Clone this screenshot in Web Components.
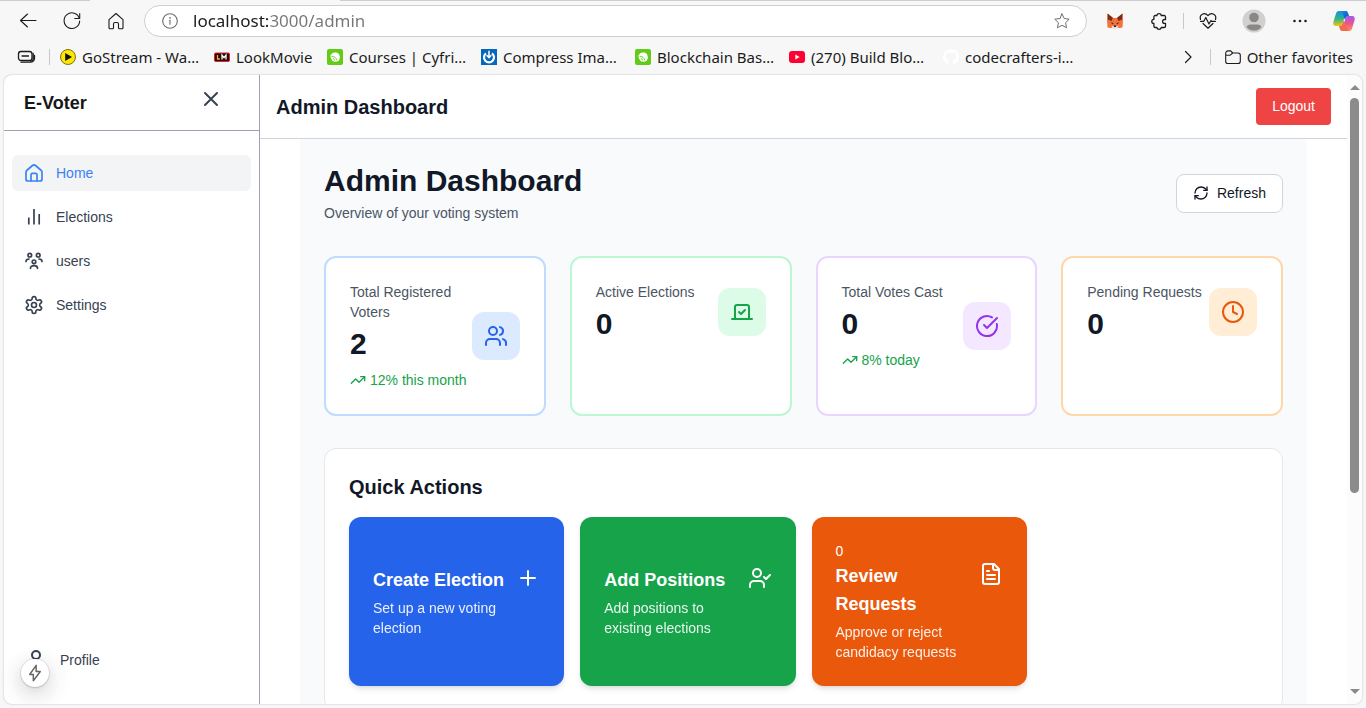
<!DOCTYPE html>
<html lang="en">
<head>
<meta charset="utf-8">
<meta name="viewport" content="width=device-width, initial-scale=1">
<title>E-Voter – Admin Dashboard</title>
<style>
  html, body { margin: 0; height: 100%; }
  body {
    display: flex; flex-direction: column; overflow: hidden;
    background: #f7f7f7; color: #111827;
    font-family: "Liberation Sans", Arial, sans-serif; font-size: 14px; line-height: 20px;
  }
</style>
</head>
<body>
<browser-toolbar></browser-toolbar>
<bookmark-bar>
  <bookmark-link icon="play" href="#gostream">GoStream - Wa…</bookmark-link>
  <bookmark-link icon="lm" href="#lookmovie" short>LookMovie</bookmark-link>
  <bookmark-link icon="cyfrin" href="#courses">Courses | Cyfri…</bookmark-link>
  <bookmark-link icon="compress" href="#compress">Compress Ima…</bookmark-link>
  <bookmark-link icon="cyfrin" href="#blockchain">Blockchain Bas…</bookmark-link>
  <bookmark-link icon="youtube" href="#build">(270) Build Blo…</bookmark-link>
  <bookmark-link icon="github" href="#codecrafters">codecrafters-i…</bookmark-link>
</bookmark-bar>
<page-frame>
  <side-bar slot="side" heading="E-Voter">
    <nav-item icon="home" href="#home" active>Home</nav-item>
    <nav-item icon="bars" href="#elections">Elections</nav-item>
    <nav-item icon="team" href="#users">users</nav-item>
    <nav-item icon="gear" href="#settings">Settings</nav-item>
    <nav-item slot="foot" icon="user" href="#profile" large>Profile</nav-item>
  </side-bar>
  <top-bar>Admin Dashboard</top-bar>
  <dash-board>
    <page-head>
      Admin Dashboard
      <span slot="sub">Overview of your voting system</span>
    </page-head>
    <card-grid>
      <stat-card tone="blue" icon="users" value="2" trend="12% this month">Total Registered Voters</stat-card>
      <stat-card tone="green" icon="vote" value="0">Active Elections</stat-card>
      <stat-card tone="purple" icon="check" value="0" trend="8% today">Total Votes Cast</stat-card>
      <stat-card tone="orange" icon="clock" value="0">Pending Requests</stat-card>
    </card-grid>
    <quick-actions>
      <action-card tone="blue" icon="plus" label="Create Election">Set up a new voting election</action-card>
      <action-card tone="green" icon="usercheck" label="Add Positions">Add positions to existing elections</action-card>
      <action-card tone="orange" icon="file" label="Review Requests" count="0">Approve or reject candidacy requests</action-card>
    </quick-actions>
  </dash-board>
</page-frame>

<script>
const stroke = (w, body, box = 24) =>
  `<svg viewBox="0 0 ${box} ${box}" fill="none" stroke="currentColor" stroke-width="${w}" stroke-linecap="round" stroke-linejoin="round" aria-hidden="true">${body}</svg>`;
const plain = (body, box = 16) => `<svg viewBox="0 0 ${box} ${box}" aria-hidden="true">${body}</svg>`;

const ICONS = {
  back: stroke(1.1, '<path d="M20 11.500H4.500M11.500 5 4.500 11.500l7 6.500"/>'),
  reload: stroke(1.1, '<path d="M19.400 9.500A7.800 7.800 0 1 0 19.700 12"/><path d="M19.700 4.500v5h-5"/>'),
  house: stroke(1.1, '<path d="M5 10.700 12 4.500l7 6.200v8a1 1 0 0 1-1 1h-2.500a1 1 0 0 1-1-1V15a1.500 1.500 0 0 0-1.500-1.500h-2A1.500 1.500 0 0 0 9.500 15v3.700a1 1 0 0 1-1 1H6a1 1 0 0 1-1-1z"/>'),
  info: stroke(1.1, '<circle cx="8" cy="8" r="7.300"/><path d="M8 7.300v4"/><circle cx="8" cy="4.800" r=".35" fill="currentColor"/>', 16),
  star: stroke(1, '<path d="m8 .9 2.200 4.600 5 .7-3.600 3.500.9 5L8 12.300l-4.500 2.400.9-5L.8 6.200l5-.7z"/>', 16),
  fox: plain('<path d="M.5.5 5 5h6L15.500.5l.5 6-.5 8-3 .5h-9l-3-.5-.5-8z" fill="#f5713a"/><path d="M.5.5 6 4.800 4.500 8 1 6.500zM15.500.5 10 4.800 11.500 8 15 6.500z" fill="#7a2c18"/><path d="M3.500 9.500l3 .6-.5 1.300zM12.500 9.500l-3 .6.500 1.300z" fill="#3b2a2a"/><path d="M4.500 13h7l-1 2.500h-5z" fill="#e8ddd5"/><path d="M6.800 12.500h2.400l-.2 1.500H7z" fill="#20242b"/>'),
  puzzle: stroke(1.3, '<path d="M8.200 6.500h1.600a2.300 2.300 0 0 1 4.500 0h2.900a1.300 1.300 0 0 1 1.300 1.300v2.700h-1a1.900 1.900 0 0 0 0 3.800h1v2.900a1.300 1.300 0 0 1-1.300 1.300h-2.900a2.300 2.300 0 0 1-4.500 0H8.200a1.300 1.300 0 0 1-1.300-1.300v-2.700a2.100 2.100 0 0 1 0-4.200V7.800a1.300 1.300 0 0 1 1.300-1.300z"/>'),
  heart: stroke(1.2, '<path d="M4.500 10.500C3 5.500 8.500 2.800 12 6.600c3.500-3.800 9-1.100 7.500 3.900M7 14.500l5 4.700 5-4.700"/><path d="M4.500 12.300h3.300l2-3.800 3.200 6.500 2-3.500.6.800h3.900"/>'),
  avatar: plain('<circle cx="12" cy="12" r="11.500" fill="#d2d0ce"/><circle cx="12" cy="8.500" r="4.800" fill="#8a8886"/><path d="M4.500 18a4 3.500 0 0 1 4-2.500h7a4 3.500 0 0 1 4 2.500 9.600 9.600 0 0 1-15 0z" fill="#8a8886"/>', 24),
  dots: plain('<g fill="#222"><circle cx="6.500" cy="12" r="1.300"/><circle cx="12" cy="12" r="1.300"/><circle cx="17.500" cy="12" r="1.300"/></g>', 24),
  copilot: plain('<defs><linearGradient id="a" x1="0" y1="0" x2="0" y2="1"><stop stop-color="#168fe8"/><stop offset=".5" stop-color="#2cb483"/><stop offset="1" stop-color="#f6c60c"/></linearGradient><linearGradient id="b" x1="0" y1="0" x2="0" y2="1"><stop stop-color="#a25aec"/><stop offset=".5" stop-color="#ee5295"/><stop offset="1" stop-color="#fe9158"/></linearGradient><linearGradient id="c" x1="0" y1="0" x2="1" y2="1"><stop stop-color="#1695ee"/><stop offset="1" stop-color="#1746bd"/></linearGradient></defs><path d="M7 2h8l-4.600 12.500C9.700 16.500 8.600 17 7 17H4C1.500 17 .8 15.200 1.500 12.500L4 4.500C4.500 2.800 5.500 2 7 2z" fill="url(#a)"/><path d="M17 22H9l4.600-12.500C14.300 7.500 15.400 7 17 7h3c2.500 0 3.200 1.800 2.500 4.500l-2.500 8c-.5 1.700-1.500 2.500-3 2.500z" fill="url(#b)"/><path d="M7 2h6.500c2.300 0 2.700 2 3.500 5-2 0-2.800.7-3.500 2.500L13 11 10 2.800z" fill="url(#c)"/><path d="M17 22h-6.500C8.200 22 7.800 20 7 17c2 0 2.800-.7 3.500-2.500l1-3z" fill="#f36b4f"/>', 24),
  stack: stroke(1.3, '<rect x="2.500" y="4.500" width="13.500" height="9" rx="2.500"/><path d="M6 9h6.500M5 15.200h9.500a4 4 0 0 0 4-4V8.500"/><path d="M17.200 6.500v5.200a2.500 2.500 0 0 1-2.500 2.500"/>', 20),
  next: stroke(1.2, '<path d="m5.500 2.500 5.500 5.500-5.500 5.500"/>', 16),
  folder: stroke(1.1, '<path d="M.7 4.200A2.300 2.300 0 0 1 3 1.900h2.700l2 2.100H13a2.300 2.300 0 0 1 2.300 2.300v5.900a2.300 2.300 0 0 1-2.300 2.300H3a2.300 2.300 0 0 1-2.300-2.300zM.9 6.200h4.300L7.700 4"/>', 16),
  play: plain('<circle cx="8" cy="8" r="7.500" fill="#ffe600" stroke="#5a5200" stroke-width=".8"/><path d="M5.200 4v8l6.800-4z" fill="#111"/>'),
  lm: plain('<rect x=".5" y="4" width="15" height="8.500" rx="1.300" fill="#230909" stroke="#d9252a"/><path d="M3.500 6v4h2.400" fill="none" stroke="#f0b32c" stroke-width="1.300"/><path d="M8 10.500V6.200l2 2.500 2-2.500v4.300" fill="none" stroke="#fff" stroke-width="1.300"/>'),
  cyfrin: plain('<rect width="16" height="16" rx="2" fill="#62cb18"/><path d="M3.300 6.500 5.500 4l3.500-.8 3 1.800 1 3.500-1.200 3.200L9 12.700l-3.200-.4L4 9.500z" fill="#fff"/><path d="M4.500 7.300c3-.3 4.800 1.700 5.200 4M6 9.500c1 .3 1.600 1 1.800 2" fill="none" stroke="#62cb18" stroke-width=".9"/>'),
  compress: plain('<rect width="16" height="16" fill="#0469bb"/><path d="M5 4.400a5 5 0 1 0 6 0" fill="none" stroke="#fff" stroke-width="2.200"/><path d="M8 1.800v6.500M5.700 6.300 8 8.700l2.300-2.400" fill="none" stroke="#fff" stroke-width="1.500"/>'),
  youtube: plain('<rect y="2" width="16" height="12" rx="3" fill="#ff0033"/><path d="M6.300 5.600v4.800l4.300-2.400z" fill="#fff"/>'),
  github: plain('<path d="M8 0a8 8 0 0 0-2.500 15.600c.4 0 .5-.2.500-.4v-1.500c-2.200.5-2.700-1-2.700-1-.4-.9-.9-1.200-.9-1.200-.7-.5.100-.5.100-.5.8.1 1.200.8 1.200.8.700 1.300 1.900.9 2.300.7.100-.5.300-.9.500-1.100-1.800-.2-3.600-.9-3.600-4 0-.9.300-1.600.8-2.100-.1-.2-.4-1 .1-2.100 0 0 .7-.2 2.200.8a7.600 7.600 0 0 1 4 0c1.500-1 2.200-.8 2.200-.8.400 1.100.2 1.900.1 2.100.5.600.8 1.300.8 2.200 0 3-1.900 3.700-3.700 3.900.3.300.6.800.6 1.500v2.300c0 .2.100.5.500.4A8 8 0 0 0 8 0z" fill="#fff"/>'),
  close: stroke(2, '<path d="M18 6 6 18M6 6l12 12"/>'),
  home: stroke(1.7, '<path d="M2 9.300c0-1 .4-1.700 1.200-2.300l5.300-4.500a2.300 2.300 0 0 1 3 0L16.800 7c.8.600 1.200 1.400 1.200 2.300v6.700a2 2 0 0 1-2 2H4a2 2 0 0 1-2-2z"/><path d="M7 17.800V11.800a1.400 1.400 0 0 1 1.400-1.400h3.200A1.400 1.400 0 0 1 13 11.800v6"/>', 20),
  bars: stroke(1.7, '<path d="M4.800 10.500v7M10 2v15.500M15.200 7v10.500" stroke-linecap="butt"/>', 20),
  team: stroke(1.7, '<circle cx="5.800" cy="4.200" r="1.800"/><circle cx="14.200" cy="4.200" r="1.800"/><circle cx="10" cy="10.800" r="1.800"/><path d="M2 10.500C2 9 3 8 5 8M18 10.500C18 9 17 8 15 8M6.500 17.300c0-1.700 1-2.600 3.500-2.600s3.500.9 3.500 2.600"/>', 20),
  gear: stroke(2, '<path d="M12.220 2h-.44a2 2 0 0 0-2 2v.18a2 2 0 0 1-1 1.730l-.43.25a2 2 0 0 1-2 0l-.15-.08a2 2 0 0 0-2.730.73l-.22.38a2 2 0 0 0 .73 2.730l.15.1a2 2 0 0 1 1 1.720v.51a2 2 0 0 1-1 1.740l-.15.09a2 2 0 0 0-.73 2.730l.22.38a2 2 0 0 0 2.730.73l.15-.08a2 2 0 0 1 2 0l.43.25a2 2 0 0 1 1 1.730V20a2 2 0 0 0 2 2h.44a2 2 0 0 0 2-2v-.18a2 2 0 0 1 1-1.730l.43-.25a2 2 0 0 1 2 0l.15.08a2 2 0 0 0 2.730-.73l.22-.39a2 2 0 0 0-.73-2.730l-.15-.08a2 2 0 0 1-1-1.740v-.5a2 2 0 0 1 1-1.740l.15-.09a2 2 0 0 0 .73-2.730l-.22-.38a2 2 0 0 0-2.730-.73l-.15.08a2 2 0 0 1-2 0l-.43-.25a2 2 0 0 1-1-1.730V4a2 2 0 0 0-2-2z"/><circle cx="12" cy="12" r="3"/>'),
  user: stroke(2, '<circle cx="12" cy="7" r="4"/><path d="M19 21v-2a4 4 0 0 0-4-4H9a4 4 0 0 0-4 4v2"/>'),
  bolt: stroke(1.3, '<path d="M9 1.200 3.300 9.300h3.200v5.600l6.200-8.200H9z"/>', 16),
  refresh: stroke(2, '<path d="M3 12a9 9 0 0 1 9-9 9.750 9.750 0 0 1 6.740 2.740L21 8"/><path d="M21 3v5h-5M21 12a9 9 0 0 1-9 9 9.750 9.750 0 0 1-6.740-2.740L3 16"/><path d="M8 16H3v5"/>'),
  users: stroke(2, '<path d="M16 21v-2a4 4 0 0 0-4-4H6a4 4 0 0 0-4 4v2"/><circle cx="9" cy="7" r="4"/><path d="M22 21v-2a4 4 0 0 0-3-3.870M16 3.130a4 4 0 0 1 0 7.750"/>'),
  vote: stroke(2, '<path d="m9 12 2 2 4-4"/><path d="M5 7c0-1.100.9-2 2-2h10a2 2 0 0 1 2 2v12H5zM22 19H2"/>'),
  check: stroke(2, '<path d="M21.800 10A10 10 0 1 1 17 3.340"/><path d="m9 11 3 3L22 4"/>'),
  clock: stroke(2, '<circle cx="12" cy="12" r="10"/><path d="M12 6v6l4 2"/>'),
  trend: stroke(2, '<path d="m22 7-8.500 8.500-5-5L2 17"/><path d="M16 7h6v6"/>'),
  plus: stroke(2, '<path d="M5 12h14M12 5v14"/>'),
  usercheck: stroke(2, '<path d="M16 21v-2a4 4 0 0 0-4-4H6a4 4 0 0 0-4 4v2"/><circle cx="9" cy="7" r="4"/><path d="m16 11 2 2 4-4"/>'),
  file: stroke(2, '<path d="M15 2H6a2 2 0 0 0-2 2v16a2 2 0 0 0 2 2h12a2 2 0 0 0 2-2V7Z"/><path d="M14 2v4a2 2 0 0 0 2 2h4M10 9H8M16 13H8M16 17H8"/>'),
};

const RESET = `<style>
  *, *::before { box-sizing: border-box; }
  h1, h2, h3, p { margin: 0; }
  button { margin: 0; padding: 0; border: 0; background: none; font: inherit; color: inherit; cursor: pointer; }
  a { color: inherit; text-decoration: none; }
</style>`;

/* Registers an element whose shadow root is filled from render(element). */
function element(name, render) {
  customElements.define(name, class extends HTMLElement {
    connectedCallback() {
      if (this.shadowRoot) return;
      const t = document.createElement('template');
      t.innerHTML = RESET + render(this);
      this.attachShadow({ mode: 'open' }).append(t.content.cloneNode(true));
    }
  });
}

element('ui-icon', el => `
  <style>
    :host { display: block; flex: none; width: var(--size, 24px); height: var(--size, 24px); }
    svg { display: block; width: 100%; height: 100%; }
  </style>${ICONS[el.getAttribute('name')]}`);

element('browser-toolbar', () => `
  <style>
    :host { display: block; font-family: "Noto Sans", sans-serif; color: #1b1b1b; }
    .tabs { display: flex; height: 1px; }
    .tabs i { background: #cdcdcd; width: 90px; }
    .tabs i:last-child { flex: 1; margin-left: 250px; }
    .bar { display: flex; align-items: center; padding: 4px 10px 4px 16px; }
    .left { display: flex; gap: 20px; margin-right: 16px; }
    button { display: block; }
    form {
      flex: 1; display: flex; align-items: center; height: 32px; padding: 0 16px 0 17px; margin-right: 16px;
      border: 1px solid #cfcfcf; border-radius: 16px; background: #fff; color: #6e6e6e; --size: 16px;
    }
    input {
      flex: 1; min-width: 0; border: 0; outline: 0; padding: 0; margin: 0 15px; height: 28px;
      font: 17px/28px "Noto Sans", sans-serif; color: #1b1b1b;
      background: linear-gradient(90deg, #1b1b1b 76px, #767676 76px) text;
      -webkit-text-fill-color: transparent;
    }
    .tools, .menu { display: flex; align-items: center; }
    .tools { gap: 20px; margin-right: 22px; }
    .menu { gap: 20px; }
    .menu button:first-child { margin-right: 2px; }
    .fox { padding: 4px; --size: 16px; }
    hr { width: 1px; height: 16px; margin: 0 -8px; border: 0; background: #c8c8c8; }
  </style>
  <div class="tabs"><i></i><i></i></div>
  <div class="bar">
    <div class="left">
      <button aria-label="Back"><ui-icon name="back"></ui-icon></button>
      <button aria-label="Reload"><ui-icon name="reload"></ui-icon></button>
      <button aria-label="Home"><ui-icon name="house"></ui-icon></button>
    </div>
    <form>
      <ui-icon name="info"></ui-icon>
      <input type="text" aria-label="Address" value="localhost:3000/admin">
      <button type="button" aria-label="Favorite"><ui-icon name="star"></ui-icon></button>
    </form>
    <div class="tools">
      <button class="fox" aria-label="Wallet"><ui-icon name="fox"></ui-icon></button>
      <button aria-label="Extensions"><ui-icon name="puzzle"></ui-icon></button>
      <hr>
      <button aria-label="Browser essentials"><ui-icon name="heart"></ui-icon></button>
    </div>
    <div class="menu">
      <button aria-label="Profile"><ui-icon name="avatar"></ui-icon></button>
      <button aria-label="Menu"><ui-icon name="dots"></ui-icon></button>
      <button aria-label="Copilot"><ui-icon name="copilot"></ui-icon></button>
    </div>
  </div>`);

element('bookmark-bar', () => `
  <style>
    :host {
      display: flex; align-items: center; height: 34px; box-sizing: border-box; padding: 0 13px 2px 16px;
      font-family: "Noto Sans", sans-serif; font-size: 15px; color: #1b1b1b; --size: 16px;
    }
    button { display: block; }
    .stack { --size: 20px; }
    hr { width: 1px; height: 16px; margin: 0 10px 0 13px; border: 0; background: #c8c8c8; }
    nav { flex: 1; min-width: 0; overflow: hidden; display: flex; gap: 16px; }
    .more + hr { margin: 0 14px; }
    .other { display: flex; align-items: center; gap: 6px; }
  </style>
  <button class="stack" aria-label="Saved tab groups"><ui-icon name="stack"></ui-icon></button>
  <hr>
  <nav><slot></slot></nav>
  <button class="more" aria-label="More favorites"><ui-icon name="next"></ui-icon></button>
  <hr>
  <button class="other"><ui-icon name="folder"></ui-icon>Other favorites</button>`);

element('bookmark-link', el => `
  <style>
    :host { display: block; flex: none; width: 138px; white-space: nowrap; }
    :host([short]) { width: 97px; }
    a { display: flex; align-items: center; gap: 6px; }
  </style>
  <a href="${el.getAttribute('href')}"><ui-icon name="${el.getAttribute('icon')}"></ui-icon><span><slot></slot></span></a>`);

element('page-frame', () => `
  <style>
    :host {
      flex: 1; min-height: 0; display: flex; position: relative; overflow: hidden;
      margin: 0 4px 4px; border-radius: 8px; background: #fff;
      box-shadow: 0 0 2px rgba(0,0,0,.28);
    }
    main { flex: 1; min-width: 0; display: flex; flex-direction: column; overflow: hidden; }
    .scroll { width: 15px; display: flex; flex-direction: column; align-items: center; background: #fcfcfc; padding: 10px 0; }
    .up, .down { border: 5px solid transparent; border-top: 0; border-bottom: 5px solid #8b8b8b; }
    .down { border-bottom: 0; border-top: 5px solid #8b8b8b; }
    .track { flex: 1; width: 9px; padding: 8px 0 0; margin-bottom: 2px; }
    .thumb { height: 67%; border-radius: 5px; background: #8b8b8b; }
    .dev {
      position: absolute; left: 17px; bottom: 17px; width: 28px; height: 28px; border-radius: 50%;
      background: #fff; color: #666; display: grid; place-items: center; --size: 18px;
      box-shadow: 0 0 0 1px rgba(0,0,0,.08), 0 1px 2px rgba(0,0,0,.12), 0 6px 20px rgba(0,0,0,.18), 0 10px 40px rgba(0,0,0,.06);
    }
  </style>
  <slot name="side"></slot>
  <main><slot></slot></main>
  <div class="scroll" aria-hidden="true"><i class="up"></i><div class="track"><div class="thumb"></div></div><i class="down"></i></div>
  <button class="dev" aria-label="Developer tools"><ui-icon name="bolt"></ui-icon></button>`);

element('side-bar', el => `
  <style>
    :host { display: flex; flex-direction: column; flex: none; box-sizing: border-box; width: 256px; border-right: 1px solid #9ca3af; }
    header { display: flex; align-items: flex-start; justify-content: space-between; padding: 12px 36px 11px 20px; border-bottom: 1px solid #9ca3af; }
    h2 { font-size: 18px; line-height: 32px; color: #171717; }
    button { color: #374151; }
    nav { flex: 1; display: flex; flex-direction: column; gap: 8px; padding: 24px 8px; }
    footer { padding: 0 8px 24px; }
  </style>
  <header><h2>${el.getAttribute('heading')}</h2><button aria-label="Close menu"><ui-icon name="close"></ui-icon></button></header>
  <nav><slot></slot></nav>
  <footer><slot name="foot"></slot></footer>`);

element('nav-item', el => `
  <style>
    :host { display: block; color: #374151; --size: 20px; }
    :host([large]) { --size: 24px; }
    a { display: flex; align-items: center; gap: 12px; padding: 8px 12px; border-radius: 6px; }
    :host([active]) { color: #3b82f6; }
    :host([active]) a { background: #f3f4f6; }
  </style>
  <a href="${el.getAttribute('href')}"><ui-icon name="${el.getAttribute('icon')}"></ui-icon><slot></slot></a>`);

element('top-bar', () => `
  <style>
    :host { display: flex; align-items: center; justify-content: space-between; padding: 13px 16px; border-bottom: 1px solid #d1d5db; }
    h2 { font-size: 20px; line-height: 28px; }
    button { padding: 8px 16px 9px; border-radius: 4px; background: #ef4444; color: #fff; }
  </style>
  <h2><slot></slot></h2><button>Logout</button>`);

element('dash-board', () => `
  <style>
    :host { flex: 1; display: flex; flex-direction: column; gap: 32px; margin: 0 40px; padding: 24px; background: #f8fafc; }
  </style><slot></slot>`);

element('page-head', () => `
  <style>
    :host { display: flex; align-items: center; justify-content: space-between; padding-bottom: 1px; }
    h1 { font-size: 30px; line-height: 36px; }
    p { margin-top: 4px; color: #4b5563; }
    button {
      display: flex; align-items: center; gap: 8px; padding: 8px 16px 9px; margin-top: 1px; border: 1px solid #d1d5db;
      border-radius: 8px; background: #fff; --size: 16px;
    }
  </style>
  <div><h1><slot></slot></h1><p><slot name="sub"></slot></p></div>
  <button><ui-icon name="refresh"></ui-icon>Refresh</button>`);

element('card-grid', () => `
  <style>:host { display: grid; grid-template-columns: repeat(4, minmax(0, 1fr)); gap: 24px; }</style><slot></slot>`);

element('stat-card', el => `
  <style>
    :host { display: block; box-sizing: border-box; padding: 24px; border: 2px solid var(--edge); border-radius: 12px; background: #fff; }
    :host([tone=blue]) { --edge: #bfdbfe; --tint: #dbeafe; --ink: #2563eb; }
    :host([tone=green]) { --edge: #bbf7d0; --tint: #dcfce7; --ink: #16a34a; }
    :host([tone=purple]) { --edge: #e9d5ff; --tint: #f3e8ff; --ink: #9333ea; }
    :host([tone=orange]) { --edge: #fed7aa; --tint: #ffedd5; --ink: #ea580c; }
    .row { display: flex; align-items: center; justify-content: space-between; }
    h3 { font-size: 14px; line-height: 20px; font-weight: 400; color: #4b5563; }
    .value { margin-top: 4px; font-size: 30px; line-height: 36px; font-weight: 700; }
    .trend { display: flex; align-items: center; gap: 4px; margin-top: 8px; color: #16a34a; white-space: nowrap; --size: 16px; }
    .badge { flex: none; padding: 12px; border-radius: 12px; background: var(--tint); color: var(--ink); }
  </style>
  <div class="row">
    <div>
      <h3><slot></slot></h3>
      <p class="value">${el.getAttribute('value')}</p>
      ${el.hasAttribute('trend') ? `<p class="trend"><ui-icon name="trend"></ui-icon>${el.getAttribute('trend')}</p>` : ''}
    </div>
    <div class="badge"><ui-icon name="${el.getAttribute('icon')}"></ui-icon></div>
  </div>`);

element('quick-actions', () => `
  <style>
    :host { display: block; padding: 24px; border: 1px solid #e5e7eb; border-radius: 12px; background: #fff; }
    h2 { margin-bottom: 16px; font-size: 20px; line-height: 28px; }
    .grid { display: grid; grid-template-columns: repeat(4, minmax(0, 1fr)); gap: 16px; }
  </style>
  <h2>Quick Actions</h2><div class="grid"><slot></slot></div>`);

element('action-card', el => `
  <style>
    :host { display: grid; }
    :host([tone=blue]) { --fill: #2563eb; }
    :host([tone=green]) { --fill: #16a34a; }
    :host([tone=orange]) { --fill: #ea580c; }
    button {
      display: flex; flex-direction: column; justify-content: center; padding: 24px; border-radius: 12px;
      background: var(--fill); color: #fff; text-align: left;
      box-shadow: 0 4px 6px -1px rgba(0,0,0,.1), 0 2px 4px -2px rgba(0,0,0,.1);
    }
    .count { line-height: 21px; }
    .row { display: flex; align-items: flex-start; justify-content: space-between; align-self: stretch; }
    h3 { font-size: 18px; line-height: 28px; }
    p { margin-top: 4px; opacity: .9; }
  </style>
  <button>
    ${el.hasAttribute('count') ? `<span class="count">${el.getAttribute('count')}</span>` : ''}
    <div class="row">
      <div><h3>${el.getAttribute('label')}</h3><p><slot></slot></p></div>
      <ui-icon name="${el.getAttribute('icon')}"></ui-icon>
    </div>
  </button>`);
</script>
</body>
</html>
